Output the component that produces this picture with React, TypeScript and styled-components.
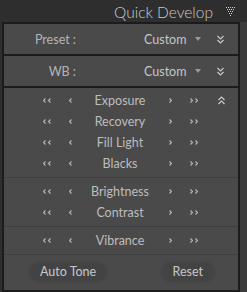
import React from "react"
import styled, { createGlobalStyle } from "styled-components"

const GlobalStyle = createGlobalStyle`
  html, body {
    margin: 0;
    padding: 0;
    background: #2e2e2e;
  }
`

const Page = styled.div`
  width: 247px;
  height: 292px;
  background: #2e2e2e;
  font-family: Lato, "Open Sans", sans-serif;
  color: #bfbfbf;
  overflow: hidden;
`

const Header = styled.div`
  height: 22px;
  display: flex;
  align-items: center;
  justify-content: flex-end;
  padding-right: 12px;
`

const Title = styled.span`
  font-size: 15.5px;
  font-weight: 300;
  color: #cacaca;
  margin-right: 13px;
  margin-top: 2px;
`

const Body = styled.div`
  display: flex;
  padding-left: 2px;
`

const Panel = styled.div`
  width: 234px;
  border: 2px solid #1c1c1c;
  background: #4a4a4a;
  display: flex;
  flex-direction: column;
`

const Track = styled.div`
  flex: 1;
  height: 270px;
  background: #3b3b3b;
`

const Section = styled.div`
  border-top: ${(p: { $first?: boolean }) => (p.$first ? "none" : "2px solid #1c1c1c")};
`

const SelectRow = styled.div`
  height: 30px;
  display: grid;
  grid-template-columns: 72px 68px 48px 12px 1fr;
  align-items: center;
  font-size: 12.5px;
`

const SelectLabel = styled.span`
  text-align: right;
  color: #b4b4b4;
`

const SelectValue = styled.span`
  grid-column: 3;
  color: #c6c6c6;
`

const Group = styled.div`
  padding: ${(p: { $pad: string }) => p.$pad};
  border-bottom: 1px solid #3e3e3e;
`

const SliderRow = styled.div`
  height: 21px;
  display: grid;
  grid-template-columns: 31px 24px 22px 78px 22px 26px 1fr;
  align-items: center;
  font-size: 12.5px;
`

const Cell = styled.span`
  display: flex;
  justify-content: center;
  align-items: center;
`

const Label = styled.span`
  text-align: center;
  color: #bdbdbd;
`

const IconCell = styled.span`
  display: flex;
  justify-content: center;
  padding-right: 2px;
`

const Buttons = styled.div`
  flex: 1;
  display: flex;
  justify-content: space-between;
  align-items: center;
  padding: 0 24px 0 26px;
  height: 33px;
`

const Pill = styled.span`
  height: 18px;
  border-radius: 9px;
  background: #434343;
  box-shadow: 0 0 2px 1px #444;
  padding: 0 ${(p: { $px: number }) => p.$px}px;
  display: flex;
  align-items: center;
  font-size: 12.5px;
  color: #c8c8c8;
`

const arrowColor = "#b8b8b8"

const Chevron = ({ dir, double }: { dir: "l" | "r"; double?: boolean }) => {
  const one = (x: number) =>
    dir === "l" ? `M${x + 2.5} 0.5 L${x + 0.5} 2.5 L${x + 2.5} 4.5` : `M${x + 0.5} 0.5 L${x + 2.5} 2.5 L${x + 0.5} 4.5`
  return (
    <svg width={double ? 8 : 3} height={5} viewBox={`0 0 ${double ? 8 : 3} 5`}>
      <path d={double ? `${one(0)} ${one(5)}` : one(0)} fill="none" stroke={arrowColor} strokeWidth={1.1} />
    </svg>
  )
}

const DoubleCaret = ({ up }: { up?: boolean }) => (
  <svg width={7} height={9} viewBox="0 0 7 9">
    <path
      d={up ? "M0.5 4 L3.5 1 L6.5 4 M0.5 8 L3.5 5 L6.5 8" : "M0.5 1 L3.5 4 L6.5 1 M0.5 5 L3.5 8 L6.5 5"}
      fill="none"
      stroke="#c9c9c9"
      strokeWidth={1.2}
    />
  </svg>
)

const DropTriangle = () => (
  <svg width={6} height={4} viewBox="0 0 6 4">
    <path d="M0 0 L6 0 L3 4 Z" fill="#9a9a9a" />
  </svg>
)

const DotTriangle = () => {
  const dots: React.ReactElement[] = []
  for (let r = 0; r < 5; r++) {
    for (let c = r; c <= 8 - r; c += 2) {
      dots.push(<rect key={`${r}-${c}`} x={c} y={r * 2} width={1} height={1} fill="#d0d0d0" />)
    }
  }
  return (
    <svg width={9} height={9} viewBox="0 0 9 9">
      {dots}
    </svg>
  )
}

const Slider = ({ name, toggle }: { name: string; toggle?: boolean }) => (
  <SliderRow>
    <span />
    <Cell>
      <Chevron dir="l" double />
    </Cell>
    <Cell>
      <Chevron dir="l" />
    </Cell>
    <Label>{name}</Label>
    <Cell>
      <Chevron dir="r" />
    </Cell>
    <Cell>
      <Chevron dir="r" double />
    </Cell>
    <IconCell>{toggle && <DoubleCaret up />}</IconCell>
  </SliderRow>
)

const Select = ({ label, value }: { label: string; value: string }) => (
  <SelectRow>
    <SelectLabel>{label}</SelectLabel>
    <SelectValue>{value}</SelectValue>
    <Cell>
      <DropTriangle />
    </Cell>
    <IconCell>
      <DoubleCaret />
    </IconCell>
  </SelectRow>
)

export default function App() {
  return (
    <Page>
      <GlobalStyle />
      <Header>
        <Title>Quick Develop</Title>
        <DotTriangle />
      </Header>
      <Body>
        <Panel>
          <Section $first>
            <Select label="Preset :" value="Custom" />
          </Section>
          <Section>
            <Select label="WB :" value="Custom" />
          </Section>
          <Section>
            <Group $pad="2px 0 3px">
              <Slider name="Exposure" toggle />
              <Slider name="Recovery" />
              <Slider name="Fill Light" />
              <Slider name="Blacks" />
            </Group>
            <Group $pad="3px 0">
              <Slider name="Brightness" />
              <Slider name="Contrast" />
            </Group>
            <Group $pad="3px 0">
              <Slider name="Vibrance" />
            </Group>
            <Buttons>
              <Pill $px={10}>Auto Tone</Pill>
              <Pill $px={11}>Reset</Pill>
            </Buttons>
          </Section>
        </Panel>
        <Track />
      </Body>
    </Page>
  )
}
